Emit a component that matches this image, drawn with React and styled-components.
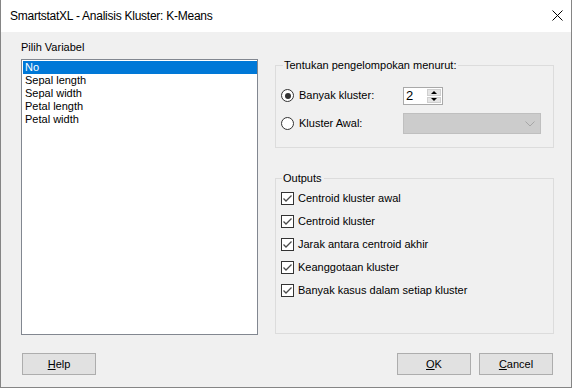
import React from 'react';
import styled, { createGlobalStyle } from 'styled-components';

const GlobalStyle = createGlobalStyle`
  html, body {
    margin: 0;
    padding: 0;
    background: #ffffff;
  }
  body {
    font-family: "Liberation Sans", Arial, sans-serif;
    font-size: 11px;
    color: #000;
  }
`;

const Window = styled.div`
  box-sizing: border-box;
  width: 572px;
  height: 388px;
  display: flex;
  flex-direction: column;
  background: #f0f0f0;
  border: 1px solid #858585;
  border-top: none;
`;

const TitleBar = styled.div`
  height: 31px;
  flex: none;
  display: flex;
  align-items: center;
  justify-content: space-between;
  background: #ffffff;
  padding: 0 8px 1px 9px;
`;

const Title = styled.span`
  font-size: 12px;
  letter-spacing: -0.25px;
  color: #000;
`;

const CloseIcon = styled.svg`
  width: 11px;
  height: 11px;
  display: block;
`;

const Body = styled.div`
  flex: 1;
  display: flex;
  flex-direction: column;
  padding: 9px 17px 12px 20px;
  min-height: 0;
`;

const Main = styled.div`
  flex: 1;
  display: flex;
  gap: 17px;
  min-height: 0;
`;

const LeftColumn = styled.div`
  width: 237px;
  display: flex;
  flex-direction: column;
`;

const RightColumn = styled.div`
  flex: 1;
  display: flex;
  flex-direction: column;
  padding-top: 18px;
`;

const Caption = styled.div`
  line-height: 13px;
  height: 13px;
  margin-bottom: 5px;
`;

const ListBox = styled.div`
  flex: 1;
  box-sizing: border-box;
  background: #ffffff;
  border: 1px solid #828790;
  padding: 1px 0 0 1px;
`;

const ListItem = styled.div`
  height: 13px;
  line-height: 13px;
  padding-left: 2px;
  background: ${p => (p.$selected ? '#0078d7' : 'transparent')};
  color: ${p => (p.$selected ? '#ffffff' : '#000000')};
`;

const Group = styled.fieldset`
  margin: 0 0 ${p => p.$mb || 0}px 0;
  min-width: 0;
  border: 1px solid #dcdcdc;
  padding: ${p => p.$pad};
  flex: ${p => (p.$grow ? 1 : 'none')};
`;

const Legend = styled.legend`
  padding: 0 2px 0 1px;
  margin-left: ${p => p.$ml}px;
  line-height: 13px;
`;

const OptionGrid = styled.div`
  display: grid;
  grid-template-columns: 122px 1fr;
  grid-auto-rows: 21px;
  row-gap: 7px;
  align-items: center;
`;

const RadioLabel = styled.label`
  display: flex;
  align-items: center;
  gap: 5px;
  line-height: 13px;
`;

const RadioCircle = styled.span`
  box-sizing: border-box;
  width: 13px;
  height: 13px;
  border-radius: 50%;
  border: 1px solid #333333;
  background: #ffffff;
  display: flex;
  align-items: center;
  justify-content: center;
  flex: none;

  &::after {
    content: '';
    width: 6px;
    height: 6px;
    border-radius: 50%;
    background: ${p => (p.$checked ? '#333333' : 'transparent')};
  }
`;

const Spin = styled.div`
  box-sizing: border-box;
  width: 40px;
  height: 18px;
  margin-top: 1px;
  border: 1px solid #a9a9a9;
  background: #ffffff;
  display: flex;
  align-items: stretch;
`;

const SpinValue = styled.span`
  flex: 1;
  padding-left: 2px;
  font-size: 13px;
  line-height: 16px;
`;

const SpinButtons = styled.div`
  width: 14px;
  display: flex;
  flex-direction: column;
  gap: 1px;
  padding: 1px 1px 1px 0;
`;

const SpinButton = styled.div`
  flex: 1;
  background: #e5e5e5;
  border: 1px solid #cfcfcf;
  display: flex;
  align-items: center;
  justify-content: center;
`;

const Arrow = styled.span`
  width: 0;
  height: 0;
  border-left: 3px solid transparent;
  border-right: 3px solid transparent;
  ${p => (p.$up ? 'border-bottom: 3px solid #000;' : 'border-top: 3px solid #000;')}
`;

const Combo = styled.div`
  box-sizing: border-box;
  width: 138px;
  height: 21px;
  background: #cccccc;
  border: 1px solid #bfbfbf;
  display: flex;
  align-items: center;
  justify-content: flex-end;
  padding-right: 5px;
`;

const ChevronIcon = styled.svg`
  width: 10px;
  height: 6px;
  display: block;
`;

const CheckList = styled.div`
  display: flex;
  flex-direction: column;
  gap: 6px;
`;

const CheckRow = styled.label`
  display: flex;
  align-items: center;
  gap: 4px;
  height: 17px;
  line-height: 13px;
`;

const CheckBox = styled.span`
  box-sizing: border-box;
  width: 13px;
  height: 13px;
  border: 1px solid #333333;
  background: #ffffff;
  flex: none;
  display: flex;
  align-items: center;
  justify-content: center;
`;

const Footer = styled.div`
  flex: none;
  height: 22px;
  margin-top: 18px;
  display: flex;
  justify-content: space-between;
`;

const ButtonGroup = styled.div`
  display: flex;
  gap: 8px;
  margin-right: 1px;
`;

const Button = styled.button`
  box-sizing: border-box;
  width: 74px;
  height: 22px;
  margin-left: ${p => p.$ml || 0}px;
  padding: 0;
  background: #e1e1e1;
  border: 1px solid #adadad;
  font-family: "Liberation Sans", Arial, sans-serif;
  font-size: 11px;
  color: #000;
`;

const Key = styled.span`
  text-decoration: underline;
`;

const variables = ['No', 'Sepal length', 'Sepal width', 'Petal length', 'Petal width'];

const outputs = [
  'Centroid kluster awal',
  'Centroid kluster',
  'Jarak antara centroid akhir',
  'Keanggotaan kluster',
  'Banyak kasus dalam setiap kluster',
];

const Check = () => (
  <svg width="11" height="11" viewBox="0 0 11 11">
    <polyline points="1.5,5.5 4,8 9.5,2.5" fill="none" stroke="#4a4a4a" strokeWidth="1.3" />
  </svg>
);

export default function App() {
  return (
    <>
      <GlobalStyle />
      <Window>
        <TitleBar>
          <Title>SmartstatXL - Analisis Kluster: K-Means</Title>
          <CloseIcon viewBox="0 0 11 11">
            <path d="M0.5 0.5 L10.5 10.5 M10.5 0.5 L0.5 10.5" stroke="#000" strokeWidth="1" />
          </CloseIcon>
        </TitleBar>
        <Body>
          <Main>
            <LeftColumn>
              <Caption>Pilih Variabel</Caption>
              <ListBox>
                {variables.map((v, i) => (
                  <ListItem key={v} $selected={i === 0}>{v}</ListItem>
                ))}
              </ListBox>
            </LeftColumn>
            <RightColumn>
              <Group $pad="13px 5px 13px 5px" $mb={24}>
                <Legend $ml={2}>Tentukan pengelompokan menurut:</Legend>
                <OptionGrid>
                  <RadioLabel>
                    <RadioCircle $checked />
                    Banyak kluster:
                  </RadioLabel>
                  <Spin>
                    <SpinValue>2</SpinValue>
                    <SpinButtons>
                      <SpinButton><Arrow $up /></SpinButton>
                      <SpinButton><Arrow /></SpinButton>
                    </SpinButtons>
                  </Spin>
                  <RadioLabel>
                    <RadioCircle />
                    Kluster Awal:
                  </RadioLabel>
                  <Combo>
                    <ChevronIcon viewBox="0 0 10 6">
                      <polyline points="0.5,0.5 5,5 9.5,0.5" fill="none" stroke="#a6a6a6" strokeWidth="1" />
                    </ChevronIcon>
                  </Combo>
                </OptionGrid>
              </Group>
              <Group $pad="5px 5px 0 5px" $grow $mb={1}>
                <Legend $ml={1}>Outputs</Legend>
                <CheckList>
                  {outputs.map(o => (
                    <CheckRow key={o}>
                      <CheckBox><Check /></CheckBox>
                      {o}
                    </CheckRow>
                  ))}
                </CheckList>
              </Group>
            </RightColumn>
          </Main>
          <Footer>
            <Button $ml={1}><Key>H</Key>elp</Button>
            <ButtonGroup>
              <Button><Key>O</Key>K</Button>
              <Button><Key>C</Key>ancel</Button>
            </ButtonGroup>
          </Footer>
        </Body>
      </Window>
    </>
  );
}
